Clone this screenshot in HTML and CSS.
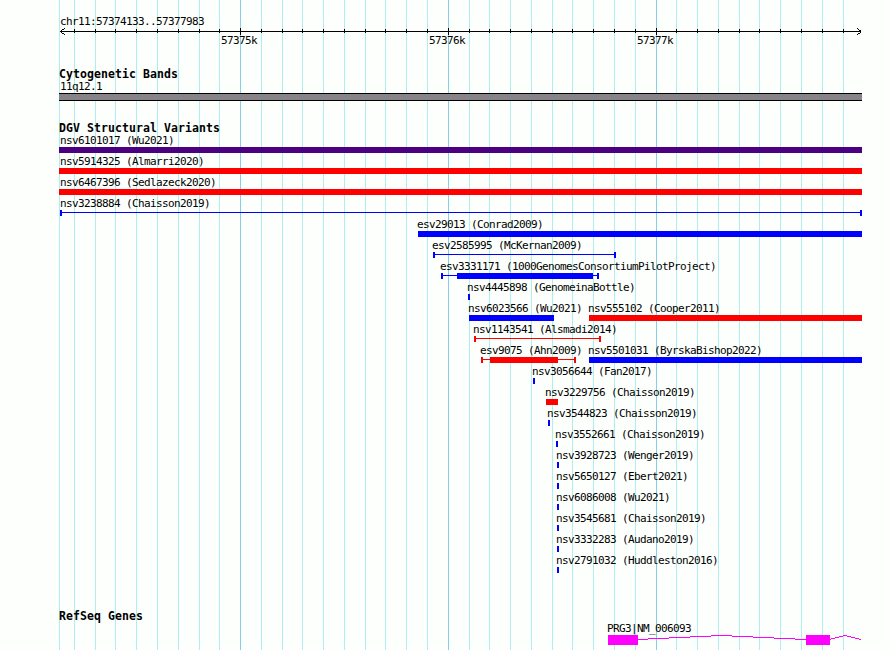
FILE: index.html
```
<!DOCTYPE html>
<html lang="en">
<head>
  <meta charset="UTF-8">
  <meta name="viewport" content="width=device-width, initial-scale=1.0">
  <title>chr11:57374133..57377983</title>
  <link rel="stylesheet" href="styles.css">
</head>
<body>
  <main class="browser">
    <!-- Vertical grid behind the tracks -->
    <svg class="grid" width="890" height="650" viewBox="0 0 890 650" shape-rendering="crispEdges">
      <path class="minor" d="M59.5 0v650M74.5 0v650M95.5 0v650M115.5 0v650M136.5 0v650M157.5 0v650M178.5 0v650M199.5 0v650M219.5 0v650M261.5 0v650M282.5 0v650M302.5 0v650M323.5 0v650M344.5 0v650M365.5 0v650M385.5 0v650M406.5 0v650M427.5 0v650M469.5 0v650M489.5 0v650M510.5 0v650M531.5 0v650M552.5 0v650M572.5 0v650M593.5 0v650M614.5 0v650M635.5 0v650M676.5 0v650M697.5 0v650M718.5 0v650M739.5 0v650M759.5 0v650M780.5 0v650M801.5 0v650M822.5 0v650M843.5 0v650"/>
      <path class="major" d="M240.5 0v650M448.5 0v650M656.5 0v650"/>
    </svg>

    <header class="ruler">
      <p class="label">chr11:57374133..57377983</p>
      <svg class="axis" width="890" height="7" viewBox="0 0 890 7" shape-rendering="crispEdges">
        <path d="M60 3.5H861M64.5 0v1M63.5 1v1M62.5 1v1M61.5 2v1M61.5 4v1M62.5 5v1M63.5 5v1M64.5 6v1M857.5 0v1M858.5 1v1M859.5 2v1M860.5 2v1M860.5 4v1M859.5 5v1M858.5 5v1M857.5 6v1"/>
        <path d="M74.5 1v4M95.5 1v4M115.5 1v4M136.5 1v4M157.5 1v4M178.5 1v4M199.5 1v4M219.5 1v4M261.5 1v4M282.5 1v4M302.5 1v4M323.5 1v4M344.5 1v4M365.5 1v4M385.5 1v4M406.5 1v4M427.5 1v4M469.5 1v4M489.5 1v4M510.5 1v4M531.5 1v4M552.5 1v4M572.5 1v4M593.5 1v4M614.5 1v4M635.5 1v4M676.5 1v4M697.5 1v4M718.5 1v4M739.5 1v4M759.5 1v4M780.5 1v4M801.5 1v4M822.5 1v4M843.5 1v4"/>
        <path d="M240.5 0v7M448.5 0v7M656.5 0v7"/>
      </svg>
      <div class="scale"><span>57375k</span><span>57376k</span><span>57377k</span></div>
    </header>

    <section class="track cytoband">
      <h2>Cytogenetic Bands</h2>
      <p class="label">11q12.1</p>
      <div class="band"></div>
    </section>

    <section class="track variants">
      <h2>DGV Structural Variants</h2>
      <div class="row"><div class="feature clipped" style="--x:59px; --w:803px"><p>nsv6101017 (Wu2021)</p><div class="bar purple"></div></div></div>
      <div class="row"><div class="feature clipped" style="--x:59px; --w:803px"><p>nsv5914325 (Almarri2020)</p><div class="bar red"></div></div></div>
      <div class="row"><div class="feature clipped" style="--x:59px; --w:803px"><p>nsv6467396 (Sedlazeck2020)</p><div class="bar red"></div></div></div>
      <div class="row"><div class="feature flush" style="--x:60px; --w:802px"><p>nsv3238884 (Chaisson2019)</p><div class="range blue"></div></div></div>
      <div class="row"><div class="feature" style="--x:418px; --w:444px"><p>esv29013 (Conrad2009)</p><div class="bar blue"></div></div></div>
      <div class="row"><div class="feature" style="--x:433px; --w:183px"><p>esv2585995 (McKernan2009)</p><div class="range blue"></div></div></div>
      <div class="row"><div class="feature" style="--x:441px; --w:158px"><p>esv3331171 (1000GenomesConsortiumPilotProject)</p><div class="range blue"><div class="core" style="--from:14px; --size:136px"></div></div></div></div>
      <div class="row"><div class="feature" style="--x:468px; --w:2px"><p>nsv4445898 (GenomeinaBottle)</p><div class="bar blue"></div></div></div>
      <div class="row">
        <div class="feature" style="--x:469px; --w:85px"><p>nsv6023566 (Wu2021)</p><div class="bar blue"></div></div>
        <div class="feature" style="--x:589px; --w:273px"><p>nsv555102 (Cooper2011)</p><div class="bar red"></div></div>
      </div>
      <div class="row"><div class="feature" style="--x:474px; --w:127px"><p>nsv1143541 (Alsmadi2014)</p><div class="range red"></div></div></div>
      <div class="row">
        <div class="feature" style="--x:481px; --w:95px"><p>esv9075 (Ahn2009)</p><div class="range red"><div class="core" style="--from:7px; --size:68px"></div></div></div>
        <div class="feature" style="--x:589px; --w:273px"><p>nsv5501031 (ByrskaBishop2022)</p><div class="bar blue"></div></div>
      </div>
      <div class="row"><div class="feature" style="--x:533px; --w:2px"><p>nsv3056644 (Fan2017)</p><div class="bar blue"></div></div></div>
      <div class="row"><div class="feature" style="--x:546px; --w:12px"><p>nsv3229756 (Chaisson2019)</p><div class="bar red"></div></div></div>
      <div class="row"><div class="feature" style="--x:548px; --w:2px"><p>nsv3544823 (Chaisson2019)</p><div class="bar blue"></div></div></div>
      <div class="row"><div class="feature" style="--x:556px; --w:2px"><p>nsv3552661 (Chaisson2019)</p><div class="bar blue"></div></div></div>
      <div class="row"><div class="feature" style="--x:557px; --w:2px"><p>nsv3928723 (Wenger2019)</p><div class="bar blue"></div></div></div>
      <div class="row"><div class="feature" style="--x:557px; --w:2px"><p>nsv5650127 (Ebert2021)</p><div class="bar blue"></div></div></div>
      <div class="row"><div class="feature" style="--x:557px; --w:2px"><p>nsv6086008 (Wu2021)</p><div class="bar blue"></div></div></div>
      <div class="row"><div class="feature" style="--x:557px; --w:2px"><p>nsv3545681 (Chaisson2019)</p><div class="bar blue"></div></div></div>
      <div class="row"><div class="feature" style="--x:557px; --w:2px"><p>nsv3332283 (Audano2019)</p><div class="bar blue"></div></div></div>
      <div class="row"><div class="feature" style="--x:557px; --w:2px"><p>nsv2791032 (Huddleston2016)</p><div class="bar blue"></div></div></div>
    </section>

    <section class="track genes">
      <h2>RefSeq Genes</h2>
      <div class="feature" style="--x:608px; --w:254px">
        <p>PRG3|NM_006093</p>
        <!-- Exons joined by intron lines -->
        <svg class="gene" width="254" height="10" viewBox="0 0 254 10" shape-rendering="crispEdges">
          <path class="exon" d="M0 0h30v10H0zM198 0h24v10h-24z"/>
          <path class="intron" d="M30 4.5h10M40 3.5h21M61 2.5h21M82 1.5h21M103 .5h21M124 1.5h21M145 2.5h21M166 3.5h21M187 4.5h11M222 4.5h1M223 3.5h4M227 2.5h4M231 1.5h4M235 .5h4M239 1.5h4M243 2.5h4M247 3.5h4M251 4.5h2"/>
        </svg>
      </div>
    </section>
  </main>
</body>
</html>
```
FILE: styles.css
```
/* Reset & Fonts */
* {
  margin: 0;
  padding: 0;
  box-sizing: border-box;
}

body {
  font-family: 'DejaVu Sans Mono', monospace;
  font-size: 11px;
  line-height: 12px;
  letter-spacing: -0.622px;
  color: #000;
  background-color: #fdfffc;
}

.browser {
  position: relative;
  width: 890px;
  height: 650px;
  overflow: hidden;
}

svg {
  display: block;
}

/* Grid */
.grid {
  position: absolute;
  top: 0;
  left: 0;
  z-index: -1;
}

.grid path {
  stroke: #afeeee;
}

.grid .major {
  stroke: #87ceeb;
}

/* Ruler */
.ruler {
  padding-top: 16px;
}

.label {
  margin-left: 60px;
}

.axis path {
  stroke: #000;
  fill: none;
}

.scale {
  display: flex;
  gap: 172px;
  padding-left: 221px;
}

.scale span {
  width: 36px;
}

/* Tracks */
.track h2 {
  margin-left: 59px;
  margin-bottom: 2px;
  font-size: 11.5px;
  line-height: 10px;
  letter-spacing: 0.077px;
}

.cytoband {
  padding-top: 22px;
}

.band {
  width: 803px;
  height: 8px;
  margin-left: 59px;
  background-color: #888388;
  border-top: 1px solid #000;
  border-bottom: 1px solid #000;
}

.variants {
  padding-top: 22px;
}

.row {
  display: grid;
  height: 21px;
}

.feature {
  grid-area: 1 / 1;
  width: var(--w);
  margin-left: var(--x);
}

.feature p {
  height: 12px;
  margin-left: -1px;
  white-space: nowrap;
}

.clipped p {
  margin-left: 1px;
}

.flush p {
  margin-left: 0;
}

/* Glyphs */
.blue {
  color: #0000ff;
}

.red {
  color: #ff0000;
}

.purple {
  color: #4b0082;
}

.bar {
  height: 6px;
  background-color: currentColor;
}

.range {
  height: 6px;
  border-left: 2px solid;
  border-right: 2px solid;
  background: linear-gradient(currentColor, currentColor) 0 2px / 100% 1px no-repeat;
}

.core {
  width: var(--size);
  height: 6px;
  margin-left: var(--from);
  background-color: currentColor;
}

/* Genes */
.genes {
  padding-top: 35px;
}

.exon {
  fill: #ff00ff;
}

.intron {
  stroke: #ff00ff;
}
```
